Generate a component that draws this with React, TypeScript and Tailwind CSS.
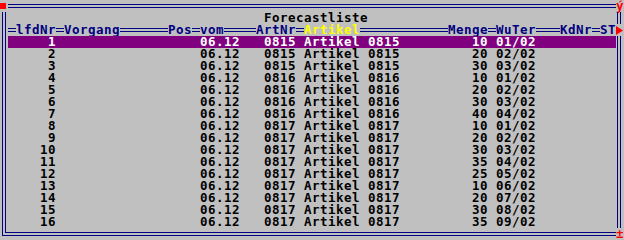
const ITEMS: { nr: number; art: string; menge: number; wu: string }[] = [
  { nr: 1, art: "0815", menge: 10, wu: "01/02" },
  { nr: 2, art: "0815", menge: 20, wu: "02/02" },
  { nr: 3, art: "0815", menge: 30, wu: "03/02" },
  { nr: 4, art: "0816", menge: 10, wu: "01/02" },
  { nr: 5, art: "0816", menge: 20, wu: "02/02" },
  { nr: 6, art: "0816", menge: 30, wu: "03/02" },
  { nr: 7, art: "0816", menge: 40, wu: "04/02" },
  { nr: 8, art: "0817", menge: 10, wu: "01/02" },
  { nr: 9, art: "0817", menge: 20, wu: "02/02" },
  { nr: 10, art: "0817", menge: 30, wu: "03/02" },
  { nr: 11, art: "0817", menge: 35, wu: "04/02" },
  { nr: 12, art: "0817", menge: 25, wu: "05/02" },
  { nr: 13, art: "0817", menge: 10, wu: "06/02" },
  { nr: 14, art: "0817", menge: 20, wu: "07/02" },
  { nr: 15, art: "0817", menge: 30, wu: "08/02" },
  { nr: 16, art: "0817", menge: 35, wu: "09/02" }
];

function Line({ className = "" }: { className?: string }) {
  return <div className={`h-1 flex-none border-y border-[#000080] ${className}`} />;
}

function LeftEdge() {
  return (
    <div className="flex h-full w-2 flex-none">
      <div className="ml-[2px] h-full w-1 border-x border-[#000080]" />
    </div>
  );
}

function RightEdge() {
  return (
    <div className="flex h-full w-2 flex-none">
      <div className="ml-px h-full w-1 border-x border-[#000080]" />
    </div>
  );
}

function Label({ children, className = "" }: { children: string; className?: string }) {
  return <span className={`flex-none whitespace-pre text-[#000080] ${className}`}>{children}</span>;
}

export default function App() {
  return (
    <div className="flex h-[240px] w-[624px] flex-col overflow-hidden bg-[#c0c0c0] font-['DejaVu_Sans_Mono',monospace] text-[12.5px] leading-[12px] font-bold tracking-[0.475px] text-black">
      {/* window top */}
      <div className="flex h-3 items-center">
        <div className="h-full w-2 flex-none">
          <div className="mt-[3px] h-[6px] w-[6px] bg-[#ff0000]" />
        </div>
        <div className="h-1 flex-1 border-y border-[#000080]" />
        <div className="w-2 flex-none overflow-visible text-[#ff0000]">ý</div>
      </div>

      {/* title */}
      <div className="flex h-3">
        <LeftEdge />
        <div className="flex-1 pl-[256px]">Forecastliste</div>
        <RightEdge />
      </div>

      {/* column header */}
      <div className="flex h-3 items-center">
        <LeftEdge />
        <div className="flex flex-1 items-center">
          <Line className="w-2" />
          <Label className="w-10">lfdNr</Label>
          <Line className="w-2" />
          <Label className="w-[56px]">Vorgang</Label>
          <Line className="w-12" />
          <Label className="w-6">Pos</Label>
          <Line className="w-2" />
          <Label className="w-6">vom</Label>
          <Line className="w-8" />
          <Label className="w-10">ArtNr</Label>
          <Line className="w-2" />
          <Label className="w-[56px] text-[#ffff00]">Artikel</Label>
          <Line className="w-[88px]" />
          <Label className="w-10">Menge</Label>
          <Line className="w-2" />
          <Label className="w-10">WuTer</Label>
          <Line className="w-6" />
          <Label className="w-8">KdNr</Label>
          <Line className="w-2" />
          <Label className="w-4">ST</Label>
        </div>
        <div className="flex h-full w-2 flex-none items-center">
          <svg width="7" height="9" viewBox="0 0 7 9" className="mt-[1px]">
            <polygon points="0,0 7,4.5 0,9" fill="#ff0000" />
          </svg>
        </div>
      </div>

      {/* data rows */}
      {ITEMS.map((item, index) => (
        <div key={item.nr} className="flex h-3">
          <LeftEdge />
          <div
            className={`flex flex-1 whitespace-pre ${
              index === 0 ? "bg-[#800080] text-white" : ""
            }`}
          >
            <span className="w-12 flex-none text-right">{item.nr}</span>
            <span className="ml-[144px] w-10 flex-none">06.12</span>
            <span className="ml-6 w-8 flex-none">{item.art}</span>
            <span className="ml-2 w-24 flex-none">Artikel {item.art}</span>
            <span className="ml-12 w-10 flex-none text-right">{item.menge}</span>
            <span className="ml-2 w-10 flex-none">{item.wu}</span>
          </div>
          <RightEdge />
        </div>
      ))}

      {/* window bottom */}
      <div className="flex h-3 items-center">
        <div className="h-full w-2 flex-none self-start">
          <div className="ml-[2px] h-[8px] w-[6px] border-b border-l border-[#000080]">
            <div className="ml-[2px] h-[5px] w-[3px] border-b border-l border-[#000080]" />
          </div>
        </div>
        <div className="h-1 flex-1 border-y border-[#000080]" />
        <div className="w-2 flex-none text-[#ff0000]">±</div>
      </div>
    </div>
  );
}
